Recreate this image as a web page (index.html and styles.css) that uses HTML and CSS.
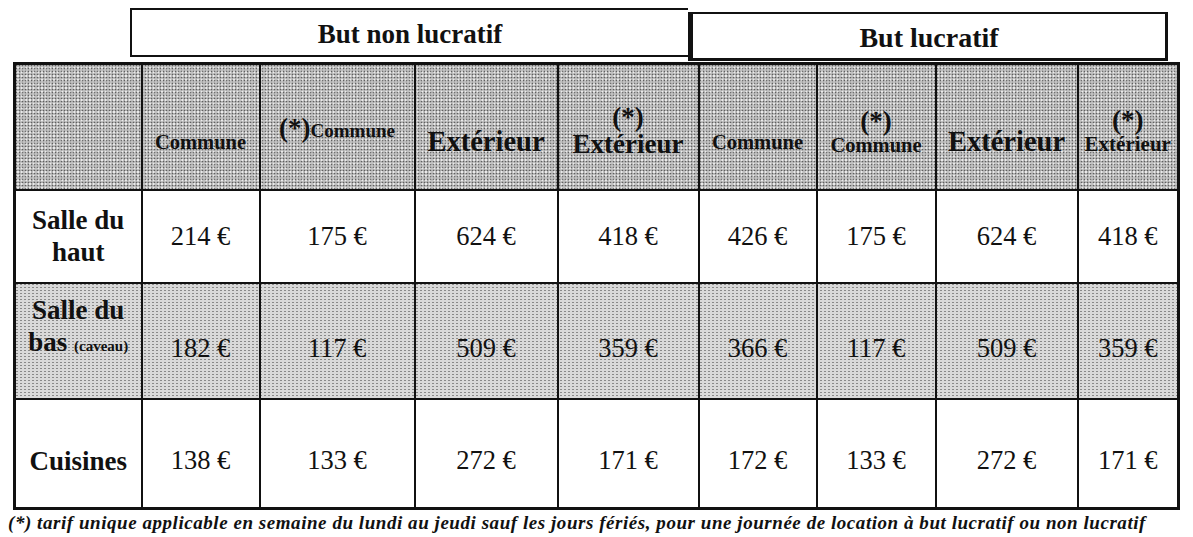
FILE: index.html
```html
<!DOCTYPE html>
<html lang="fr">
<head>
<meta charset="utf-8">
<title>Tarifs de location</title>
<link rel="stylesheet" href="styles.css">
</head>
<body>
<div class="page">
  <div class="groups">
    <div class="group group-non">But non lucratif</div>
    <div class="group group-lucr">But lucratif</div>
  </div>
  <table class="tarifs">
    <colgroup>
      <col class="c-label"><col class="c2"><col class="c3"><col class="c4"><col class="c5">
      <col class="c6"><col class="c7"><col class="c8"><col class="c9">
    </colgroup>
    <tr class="head">
      <th></th>
      <th><span class="h-md">Commune</span></th>
      <th class="up"><span class="star">(*)</span><span class="h-sm">Commune</span></th>
      <th><span class="h-lg">Extérieur</span></th>
      <th class="two"><span class="star">(*)</span><br><span class="h-lg2">Extérieur</span></th>
      <th><span class="h-md">Commune</span></th>
      <th class="two"><span class="star">(*)</span><br><span class="h-md">Commune</span></th>
      <th><span class="h-lg">Extérieur</span></th>
      <th class="two"><span class="star">(*)</span><br><span class="h-sm2">Extérieur</span></th>
    </tr>
    <tr class="r1">
      <th class="label">Salle du<br>haut</th>
      <td>214 €</td><td>175 €</td><td>624 €</td><td>418 €</td>
      <td>426 €</td><td>175 €</td><td>624 €</td><td>418 €</td>
    </tr>
    <tr class="r2 shade">
      <th class="label">Salle du<br>bas <span class="small">(caveau)</span></th>
      <td>182 €</td><td>117 €</td><td>509 €</td><td>359 €</td>
      <td>366 €</td><td>117 €</td><td>509 €</td><td>359 €</td>
    </tr>
    <tr class="r3">
      <th class="label">Cuisines</th>
      <td>138 €</td><td>133 €</td><td>272 €</td><td>171 €</td>
      <td>172 €</td><td>133 €</td><td>272 €</td><td>171 €</td>
    </tr>
  </table>
  <p class="note">(*) tarif unique applicable en semaine du lundi au jeudi sauf les jours fériés, pour une journée de location à but lucratif ou non lucratif</p>
</div>
</body>
</html>
```

FILE: styles.css
```css
html, body {
  margin: 0;
  padding: 0;
  background: #ffffff;
}

body {
  width: 1193px;
  height: 537px;
  overflow: hidden;
  font-family: "Liberation Serif", "Times New Roman", serif;
  color: #111111;
}

.page {
  padding: 8px 0 0 13px;
}

.groups {
  display: flex;
  align-items: flex-start;
  margin-left: 117px;
}

.group {
  box-sizing: border-box;
  height: 49px;
  display: flex;
  align-items: center;
  justify-content: center;
  font-weight: bold;
  font-size: 27px;
  border: 2px solid #111;
  padding-top: 3px;
}

.group-non {
  width: 558px;
  border-right: 0;
}

.group-lucr {
  width: 480px;
  margin-top: 4px;
  border-style: solid;
  border-color: #111;
  border-width: 2px 3px 3px 5px;
  font-size: 28px;
}

.tarifs {
  margin-top: 1px;
  width: 1164px;
  table-layout: fixed;
  border-collapse: collapse;
  border: 3px solid #111;
}

.c-label { width: 127px; }
.c2 { width: 118px; }
.c3 { width: 155px; }
.c4 { width: 143px; }
.c5 { width: 141px; }
.c6 { width: 118px; }
.c7 { width: 119px; }
.c8 { width: 142px; }
.c9 { width: 101px; }

.tarifs th,
.tarifs td {
  border: 2px solid #111;
  padding: 0;
  text-align: center;
  vertical-align: middle;
}

.tarifs td {
  font-size: 26.5px;
  font-weight: normal;
}

.head {
  height: 126px;
  background-color: #c0c0c0;
  background-image: radial-gradient(circle, rgba(30, 30, 30, 0.6) 0.7px, transparent 1.1px),
                    radial-gradient(circle, rgba(255, 255, 255, 0.7) 0.7px, transparent 1.1px);
  background-size: 3px 3px, 4px 4px;
  background-position: 0 0, 1px 2px;
}

.head th {
  padding-top: 30px;
  line-height: 1.0;
  font-weight: bold;
}

.head th.up {
  padding-top: 4px;
}

.head th.two {
  padding-top: 9px;
}

.star { font-size: 27px; }
.h-sm { font-size: 19px; }
.h-md { font-size: 20.5px; }
.h-lg { font-size: 28.5px; }
.h-lg2 { font-size: 27px; }
.h-sm2 { font-size: 21px; }

.r1 { height: 93px; }
.r2 { height: 116px; }
.r3 { height: 110px; }

.r2 td { padding-top: 16px; }
.r3 td { padding-top: 14px; }

.shade {
  background-color: #d9d9d9;
  background-image: radial-gradient(circle, rgba(40, 40, 40, 0.45) 0.7px, transparent 1.1px);
  background-size: 4px 3px;
}

.label {
  font-size: 27px;
  font-weight: bold;
  line-height: 32px;
}

.r2 .label { padding-bottom: 26px; }
.r3 .label { padding-top: 16px; }

.small {
  font-size: 15px;
}

.note {
  margin: 3px 0 0 -5px;
  font-style: italic;
  font-weight: bold;
  font-size: 19px;
  letter-spacing: 0.55px;
  line-height: 20px;
  white-space: nowrap;
}
```
